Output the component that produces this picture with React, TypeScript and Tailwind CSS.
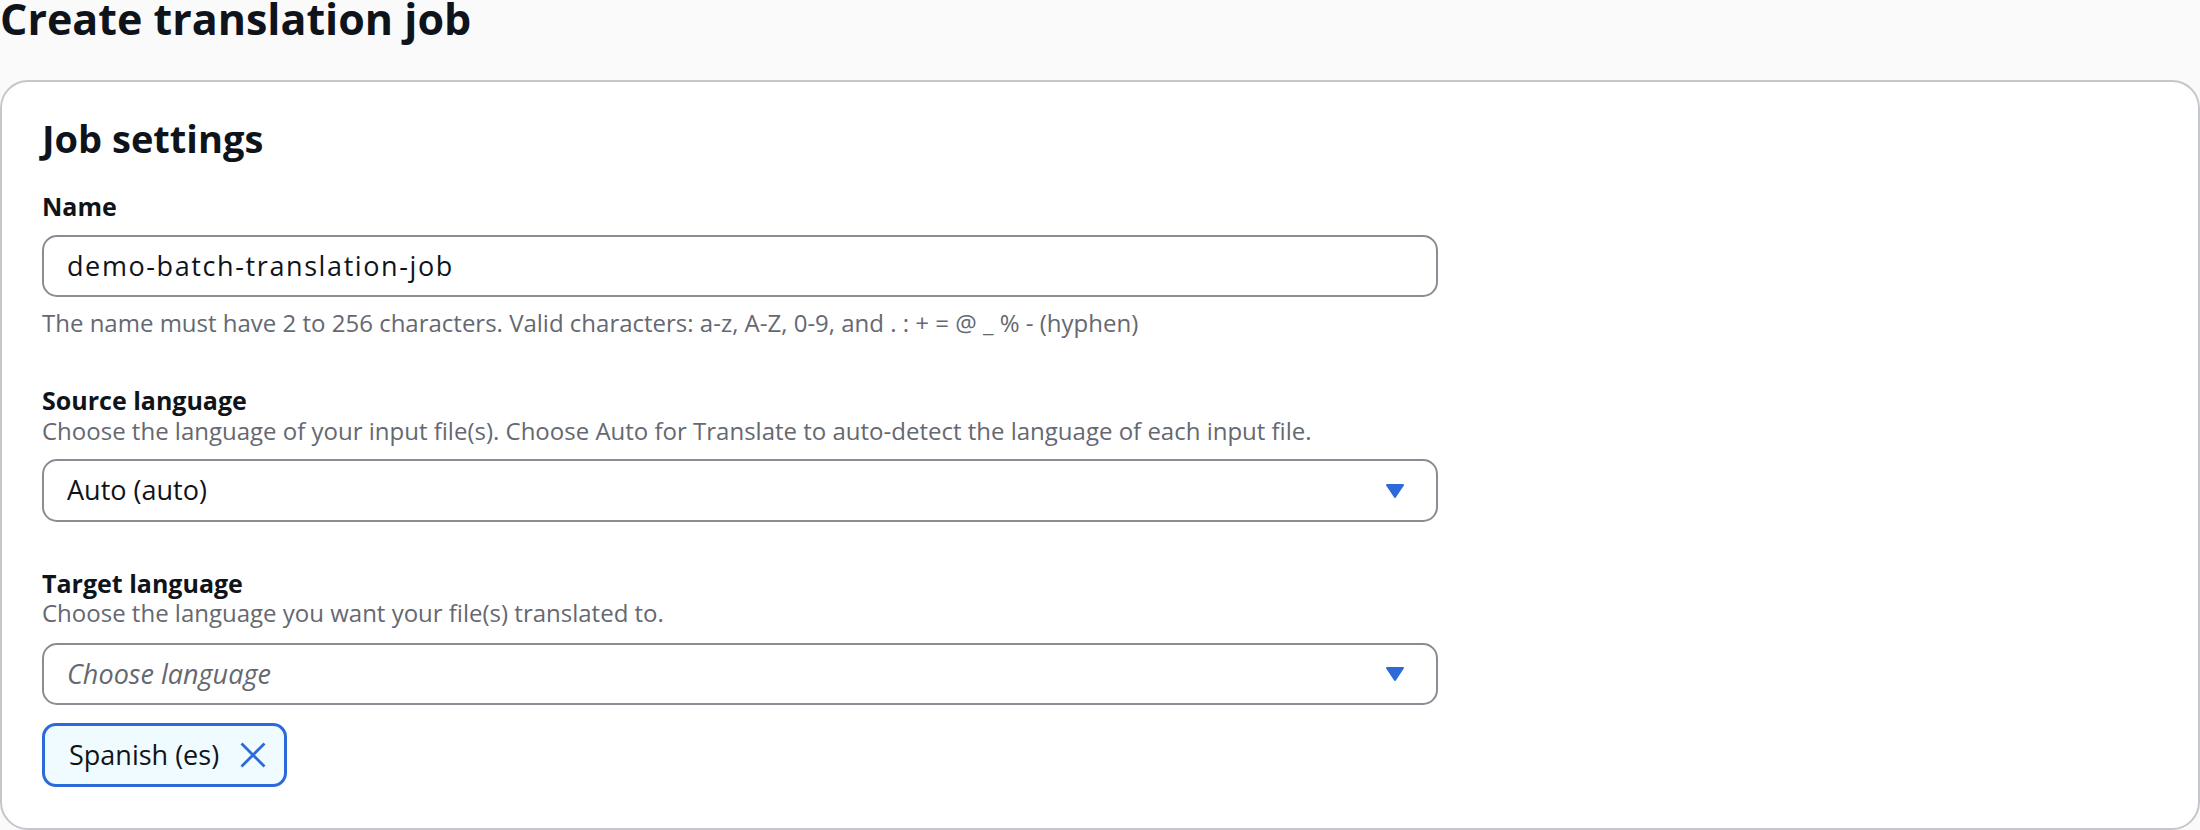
import React from "react";

function Caret() {
  return (
    <svg width="32" height="32" viewBox="0 0 16 16" aria-hidden="true">
      <path
        d="M4 5h8l-4 6-4-6z"
        fill="#2c6ad9"
        stroke="#2c6ad9"
        strokeWidth="1"
        strokeLinejoin="round"
      />
    </svg>
  );
}

function CloseIcon() {
  return (
    <svg width="26" height="26" viewBox="0 0 26 26" aria-hidden="true">
      <path
        d="M1.5 1.5 24.5 24.5M24.5 1.5 1.5 24.5"
        stroke="#2c6ad9"
        strokeWidth="2.8"
        fill="none"
      />
    </svg>
  );
}

export default function App() {
  return (
    <div className="min-h-[830px] bg-[#fafafa] font-['Open_Sans',sans-serif] text-[#0f141a]">
      <h1 className="text-[43px] font-bold leading-[37px]">Create translation job</h1>
      <div className="mt-[43px] bg-white border-2 border-[#c6c6cd] rounded-[28px] pl-[40px] pt-[33px] pb-[41px]">
        <h2 className="text-[38px] font-bold leading-[46px]">Job settings</h2>

        <div className="mt-[31px] text-[25px] font-bold leading-[28px]">Name</div>
        <div className="mt-[15px] w-[1396px] h-[62px] border-2 border-[#8c8c94] rounded-[15px] px-[23px] flex items-center text-[27px]">
          <span className="tracking-[1.6px]">demo-batch-translation-job</span>
        </div>
        <div className="mt-[14px] text-[24px] leading-[24px] text-[#656871]">
          The name must have 2 to 256 characters. Valid characters: a-z, A-Z, 0-9, and . : + = @ _ % - (hyphen)
        </div>

        <div className="mt-[51px] text-[25px] font-bold leading-[28px]">Source language</div>
        <div className="mt-[5px] text-[24px] leading-[24px] text-[#656871]">
          Choose the language of your input file(s). Choose Auto for Translate to auto-detect the language of each input file.
        </div>
        <div className="mt-[16px] w-[1396px] h-[63px] border-2 border-[#8c8c94] rounded-[15px] pl-[23px] pr-[25px] flex items-center justify-between text-[27px]">
          <span>Auto (auto)</span>
          <Caret />
        </div>

        <div className="mt-[47px] text-[25px] font-bold leading-[28px]">Target language</div>
        <div className="mt-[4px] text-[24px] leading-[24px] text-[#656871]">
          Choose the language you want your file(s) translated to.
        </div>
        <div className="mt-[18px] w-[1396px] h-[62px] border-2 border-[#8c8c94] rounded-[15px] pl-[23px] pr-[25px] flex items-center justify-between text-[27px]">
          <span className="italic text-[#656871]">Choose language</span>
          <Caret />
        </div>

        <div className="mt-[18px] inline-flex items-center h-[64px] pl-[24px] pr-[18px] gap-[21px] border-[3px] border-[#2c6ad9] rounded-[14px] bg-[#f0fbff] text-[27px]">
          <span>Spanish (es)</span>
          <CloseIcon />
        </div>
      </div>
    </div>
  );
}
